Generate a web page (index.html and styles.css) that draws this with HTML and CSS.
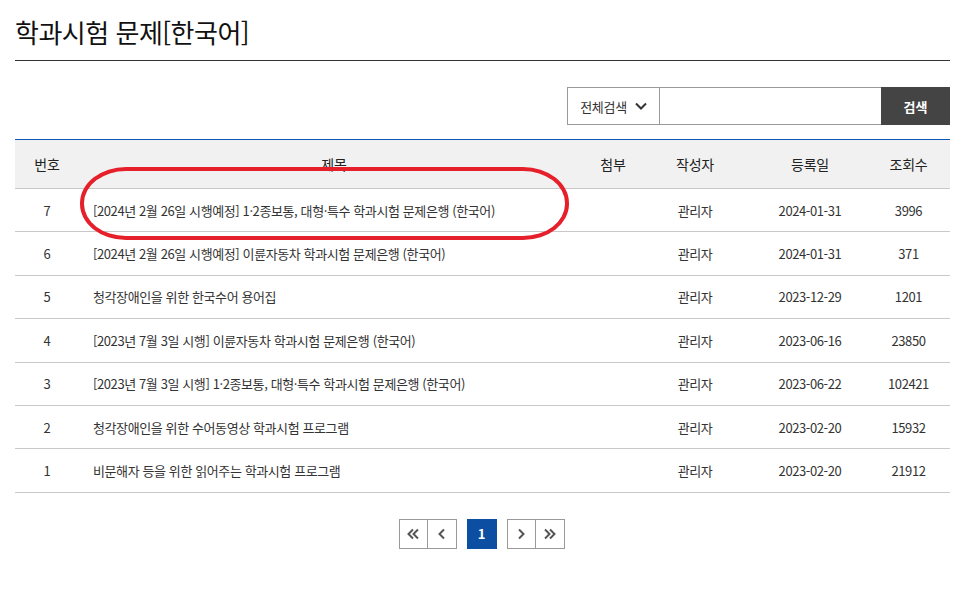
FILE: index.html
```html
<!DOCTYPE html>
<html lang="ko">
<head>
<meta charset="utf-8">
<title>학과시험 문제[한국어]</title>
<link rel="stylesheet" href="styles.css">
</head>
<body>
<div class="page">
  <h1 class="title">학과시험 문제[한국어]</h1>

  <div class="search">
    <div class="select">
      <span>전체검색</span>
      <svg width="12" height="8" viewBox="0 0 12 8"><path d="M1 1.5 L6 6.5 L11 1.5" fill="none" stroke="#333" stroke-width="2"/></svg>
    </div>
    <div class="input"></div>
    <div class="btn">검색</div>
  </div>

  <table class="board">
    <colgroup>
      <col class="c-no"><col class="c-title"><col class="c-file"><col class="c-writer"><col class="c-date"><col class="c-hit">
    </colgroup>
    <thead>
      <tr><th>번호</th><th>제목</th><th>첨부</th><th>작성자</th><th>등록일</th><th>조회수</th></tr>
    </thead>
    <tbody>
      <tr><td>7</td><td class="t">[2024년 2월 26일 시행예정] 1·2종보통, 대형·특수 학과시험 문제은행 (한국어)</td><td></td><td>관리자</td><td>2024-01-31</td><td>3996</td></tr>
      <tr><td>6</td><td class="t">[2024년 2월 26일 시행예정] 이륜자동차 학과시험 문제은행 (한국어)</td><td></td><td>관리자</td><td>2024-01-31</td><td>371</td></tr>
      <tr><td>5</td><td class="t">청각장애인을 위한 한국수어 용어집</td><td></td><td>관리자</td><td>2023-12-29</td><td>1201</td></tr>
      <tr><td>4</td><td class="t">[2023년 7월 3일 시행] 이륜자동차 학과시험 문제은행 (한국어)</td><td></td><td>관리자</td><td>2023-06-16</td><td>23850</td></tr>
      <tr><td>3</td><td class="t">[2023년 7월 3일 시행] 1·2종보통, 대형·특수 학과시험 문제은행 (한국어)</td><td></td><td>관리자</td><td>2023-06-22</td><td>102421</td></tr>
      <tr><td>2</td><td class="t">청각장애인을 위한 수어동영상 학과시험 프로그램</td><td></td><td>관리자</td><td>2023-02-20</td><td>15932</td></tr>
      <tr><td>1</td><td class="t">비문해자 등을 위한 읽어주는 학과시험 프로그램</td><td></td><td>관리자</td><td>2023-02-20</td><td>21912</td></tr>
    </tbody>
  </table>

  <div class="paging">
    <div class="group">
      <a class="pg"><svg width="14" height="12" viewBox="0 0 14 12"><path d="M7 1.5 L2.5 6 L7 10.5 M12 1.5 L7.5 6 L12 10.5" fill="none" stroke="#555" stroke-width="2"/></svg></a>
      <a class="pg"><svg width="10" height="12" viewBox="0 0 10 12"><path d="M7 1.5 L2.5 6 L7 10.5" fill="none" stroke="#555" stroke-width="2"/></svg></a>
    </div>
    <a class="pg on">1</a>
    <div class="group">
      <a class="pg"><svg width="10" height="12" viewBox="0 0 10 12"><path d="M3 1.5 L7.5 6 L3 10.5" fill="none" stroke="#555" stroke-width="2"/></svg></a>
      <a class="pg"><svg width="14" height="12" viewBox="0 0 14 12"><path d="M2 1.5 L6.5 6 L2 10.5 M7 1.5 L11.5 6 L7 10.5" fill="none" stroke="#555" stroke-width="2"/></svg></a>
    </div>
  </div>

  <div class="mark"></div>
</div>
</body>
</html>
```

FILE: styles.css
```css
* { box-sizing: border-box; }
html, body { margin: 0; padding: 0; background: #fff; }
body {
  font-family: "Noto Sans CJK KR", "Noto Sans", sans-serif;
  color: #333;
  width: 962px;
  height: 590px;
  overflow: hidden;
}
.page {
  position: relative;
  margin-left: 15px;
  width: 935px;
}
.title {
  margin: 0;
  padding: 13px 0 9px;
  font-size: 26px;
  line-height: 38px;
  font-weight: 400;
  color: #111;
  border-bottom: 1px solid #333;
  letter-spacing: -0.5px;
}
.search {
  display: flex;
  justify-content: flex-end;
  margin-top: 26px;
  height: 38px;
}
.select {
  width: 93px;
  border: 1px solid #999;
  display: flex;
  align-items: center;
  justify-content: center;
  gap: 8px;
  font-size: 13px;
  letter-spacing: -0.3px;
  color: #333;
}
.input {
  width: 221px;
  border: 1px solid #999;
  border-left: 0;
  border-right: 0;
}
.btn {
  width: 69px;
  background: #444;
  color: #fff;
  font-size: 13px;
  font-weight: 700;
  display: flex;
  align-items: center;
  justify-content: center;
}
.board {
  margin-top: 14px;
  width: 935px;
  border-collapse: collapse;
  table-layout: fixed;
  border-top: 1px solid #0b57b8;
}
.c-no { width: 64px; }
.c-title { width: 510px; }
.c-file { width: 48px; }
.c-writer { width: 116px; }
.c-date { width: 114px; }
.c-hit { width: 83px; }
.board th {
  height: 49px;
  background: #f1f1f1;
  font-size: 14px;
  font-weight: 400;
  color: #222;
  border-bottom: 1px solid #c8c8c8;
  text-align: center;
  padding: 0;
  letter-spacing: -0.2px;
}
.board td {
  height: 43.4px;
  font-size: 13px;
  color: #333;
  border-bottom: 1px solid #c8c8c8;
  text-align: center;
  padding: 0;
  white-space: nowrap;
  letter-spacing: -0.4px;
}
.board td.t {
  text-align: left;
  padding-left: 14px;
}
.paging {
  display: flex;
  justify-content: center;
  gap: 10px;
  margin-top: 26px;
  margin-left: -2px;
}
.group { display: flex; }
.pg {
  width: 29px;
  height: 30px;
  border: 1px solid #999;
  display: flex;
  align-items: center;
  justify-content: center;
  background: #fff;
  font-size: 13px;
}
.group .pg + .pg { border-left: 0; }
.pg.on {
  width: 30px;
  background: #0b4ea2;
  border-color: #0b4ea2;
  color: #fff;
  font-weight: 700;
}
.mark {
  position: absolute;
  left: 65px;
  top: 167px;
  width: 489px;
  height: 73px;
  border: 4px solid #e5202a;
  border-radius: 46px / 36px;
  pointer-events: none;
}
```
